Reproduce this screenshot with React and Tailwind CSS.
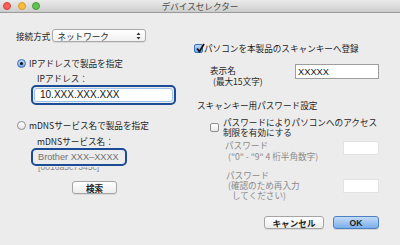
import React from 'react';

const jp = { fontFamily: '"Noto Sans CJK JP", "Liberation Sans", sans-serif' };

const Radio = ({ checked }) =>
  checked ? (
    <div className="w-[9px] h-[9px] rounded-full border border-[#3b6fb5] bg-gradient-to-b from-[#bcd8f6] to-[#6fa6e6] flex items-center justify-center">
      <div className="w-[3px] h-[3px] rounded-full bg-[#111]" />
    </div>
  ) : (
    <div className="w-[9px] h-[9px] rounded-full border border-[#8e8e8e] bg-gradient-to-b from-[#ffffff] to-[#e6e6e6]" />
  );

const Checkbox = ({ checked }) =>
  checked ? (
    <div className="relative w-[9px] h-[9px] rounded-[2px] border border-[#3b6fb5] bg-gradient-to-b from-[#bcd8f6] to-[#6fa6e6]">
      <svg className="absolute left-[1px] -top-[2px]" width="9" height="10" viewBox="0 0 9 10">
        <path d="M1 5.5 L3.5 8.5 L8 1" stroke="#111" strokeWidth="1.7" fill="none" />
      </svg>
    </div>
  ) : (
    <div className="w-[9px] h-[9px] rounded-[2px] border border-[#8e8e8e] bg-gradient-to-b from-[#ffffff] to-[#e9e9e9]" />
  );

const Light = ({ color, border }) => (
  <div className={`w-[8px] h-[8px] rounded-full border ${color} ${border}`} />
);

export default function App() {
  return (
    <div className="w-[400px] h-[245px] bg-[#ececec] overflow-hidden text-[#1e1e1e]" style={jp}>
      {/* title bar */}
      <div className="relative h-[13px] bg-gradient-to-b from-[#ebebeb] to-[#cdcdcd] border-b border-[#9a9a9a] flex items-center">
        <div className="flex items-center gap-[6.5px] pl-[3px]">
          <Light color="bg-[#fb5f57]" border="border-[#d0423b]" />
          <Light color="bg-[#fcbb3e]" border="border-[#d59a2a]" />
          <Light color="bg-[#5fc454]" border="border-[#3f9a36]" />
        </div>
        <div className="absolute inset-0 flex items-center justify-center text-[8.6px] text-[#4a4a4a]">デバイスセレクター</div>
      </div>

      <div className="flex">
        {/* left column */}
        <div className="w-[194px] flex flex-col text-[8.6px] leading-[10px]">
          <div className="mt-[16px] h-[13px] flex items-center pl-[16px]">
            <span>接続方式</span>
            <div className="ml-[2px] w-[94px] h-[13px] rounded-[3px] border border-[#a9a9a9] bg-gradient-to-b from-[#ffffff] to-[#f1f1f1] shadow-[0_1px_0_rgba(0,0,0,0.08)] flex items-center justify-between pl-[4px] pr-[4px]">
              <span>ネットワーク</span>
              <svg width="5" height="8" viewBox="0 0 5 8">
                <path d="M2.5 0.5 L4.5 3 L0.5 3 Z M2.5 7.5 L4.5 5 L0.5 5 Z" fill="#333" />
              </svg>
            </div>
          </div>

          <div className="mt-[16px] h-[10px] flex items-center pl-[17px]">
            <Radio checked />
            <span className="ml-[3px]">IPアドレスで製品を指定</span>
          </div>

          <div className="mt-[5px] h-[10px] pl-[37px]">IPアドレス：</div>

          <div className="mt-[2px] ml-[31px] w-[145px] h-[20px] rounded-[5px] border-[2px] border-[#1d4c97] p-[1px]">
            <div className="w-full h-full rounded-[3px] border border-[#9cc3ee] bg-white flex items-center pl-[5px] text-[10px] text-[#111]" style={{ fontFamily: '"Liberation Sans", sans-serif' }}>
              10.XXX.XXX.XXX
            </div>
          </div>

          <div className="mt-[15px] h-[10px] flex items-center pl-[17px]">
            <Radio />
            <span className="ml-[3px]">mDNSサービス名で製品を指定</span>
          </div>

          <div className="mt-[6px] h-[10px] pl-[37px]">mDNSサービス名：</div>

          <div className="mt-[2px] ml-[31px] w-[96px] h-[18px] rounded-[5px] border-[2px] border-[#1d4c97] bg-[#ececec] flex items-center pl-[5px] text-[9.2px] text-[#707070]" style={{ fontFamily: '"Liberation Sans", sans-serif' }}>
            Brother XXX–XXXX
          </div>

          <div className="mt-[1px] ml-[38px] h-[5px] overflow-hidden">
            <div className="-mt-[5px] text-[8.6px] leading-[10px] text-[#8a8a8a]" style={{ fontFamily: '"Liberation Sans", sans-serif' }}>[0016a5c7345c]</div>
          </div>

          <div className="mt-[9px] ml-[72px] w-[45px] h-[13px] rounded-[3px] border border-[#a5a5a5] bg-gradient-to-b from-[#ffffff] to-[#ececec] shadow-[0_1px_0_rgba(0,0,0,0.08)] flex items-center justify-center font-bold">
            検索
          </div>
        </div>

        {/* right column */}
        <div className="flex-1 flex flex-col text-[8.6px] leading-[10px]">
          <div className="mt-[30px] h-[10px] flex items-center">
            <Checkbox checked />
            <span className="ml-[1px]">パソコンを本製品のスキャンキーへ登録</span>
          </div>

          <div className="mt-[11px] flex">
            <div className="ml-[16px] mt-[1px] w-[85px] leading-[11px]">
              <div>表示名</div>
              <div className="pl-[3px]">(最大15文字)</div>
            </div>
            <div className="w-[84px] h-[15px] border border-[#9d9d9d] bg-white flex items-center pl-[2px] text-[9.3px] text-[#111]" style={{ fontFamily: '"Liberation Sans", sans-serif' }}>
              XXXXX
            </div>
          </div>

          <div className="mt-[13px] h-[10px] ml-[3px]">スキャンキー用パスワード設定</div>

          <div className="mt-[7px] flex ml-[16px]">
            <div className="mt-[6px]">
              <Checkbox />
            </div>
            <div className="ml-[4px]">
              <div>パスワードによりパソコンへのアクセス</div>
              <div>制限を有効にする</div>
            </div>
          </div>

          <div className="mt-[3px] flex">
            <div className="ml-[31px] w-[118px] text-[#8a8a8a]">
              <div>パスワード</div>
              <div className="pl-[3px] mt-[1px]">("0" - "9" 4 桁半角数字)</div>
            </div>
            <div className="mt-[1px] w-[36px] h-[14px] bg-white border border-[#e2e2e2]" />
          </div>

          <div className="mt-[9px] flex">
            <div className="ml-[32px] w-[117px] text-[#8a8a8a]">
              <div>パスワード</div>
              <div className="pl-[2px]">(確認のため再入力</div>
              <div className="pl-[6px]">してください)</div>
            </div>
            <div className="mt-[9px] w-[36px] h-[14px] bg-white border border-[#e2e2e2]" />
          </div>

          <div className="mt-[16px] flex">
            <div className="ml-[70px] w-[60px] h-[13px] rounded-[3px] border border-[#a5a5a5] bg-gradient-to-b from-[#ffffff] to-[#ececec] shadow-[0_1px_0_rgba(0,0,0,0.08)] flex items-center justify-center font-bold">
              キャンセル
            </div>
            <div className="ml-[9px] w-[46px] h-[13px] rounded-[3px] border border-[#4c7fc4] bg-gradient-to-b from-[#c3dbf7] to-[#79aeea] shadow-[0_1px_0_rgba(0,0,0,0.1)] flex items-center justify-center font-bold" style={{ fontFamily: '"Liberation Sans", sans-serif' }}>
              OK
            </div>
          </div>
        </div>
      </div>
    </div>
  );
}
